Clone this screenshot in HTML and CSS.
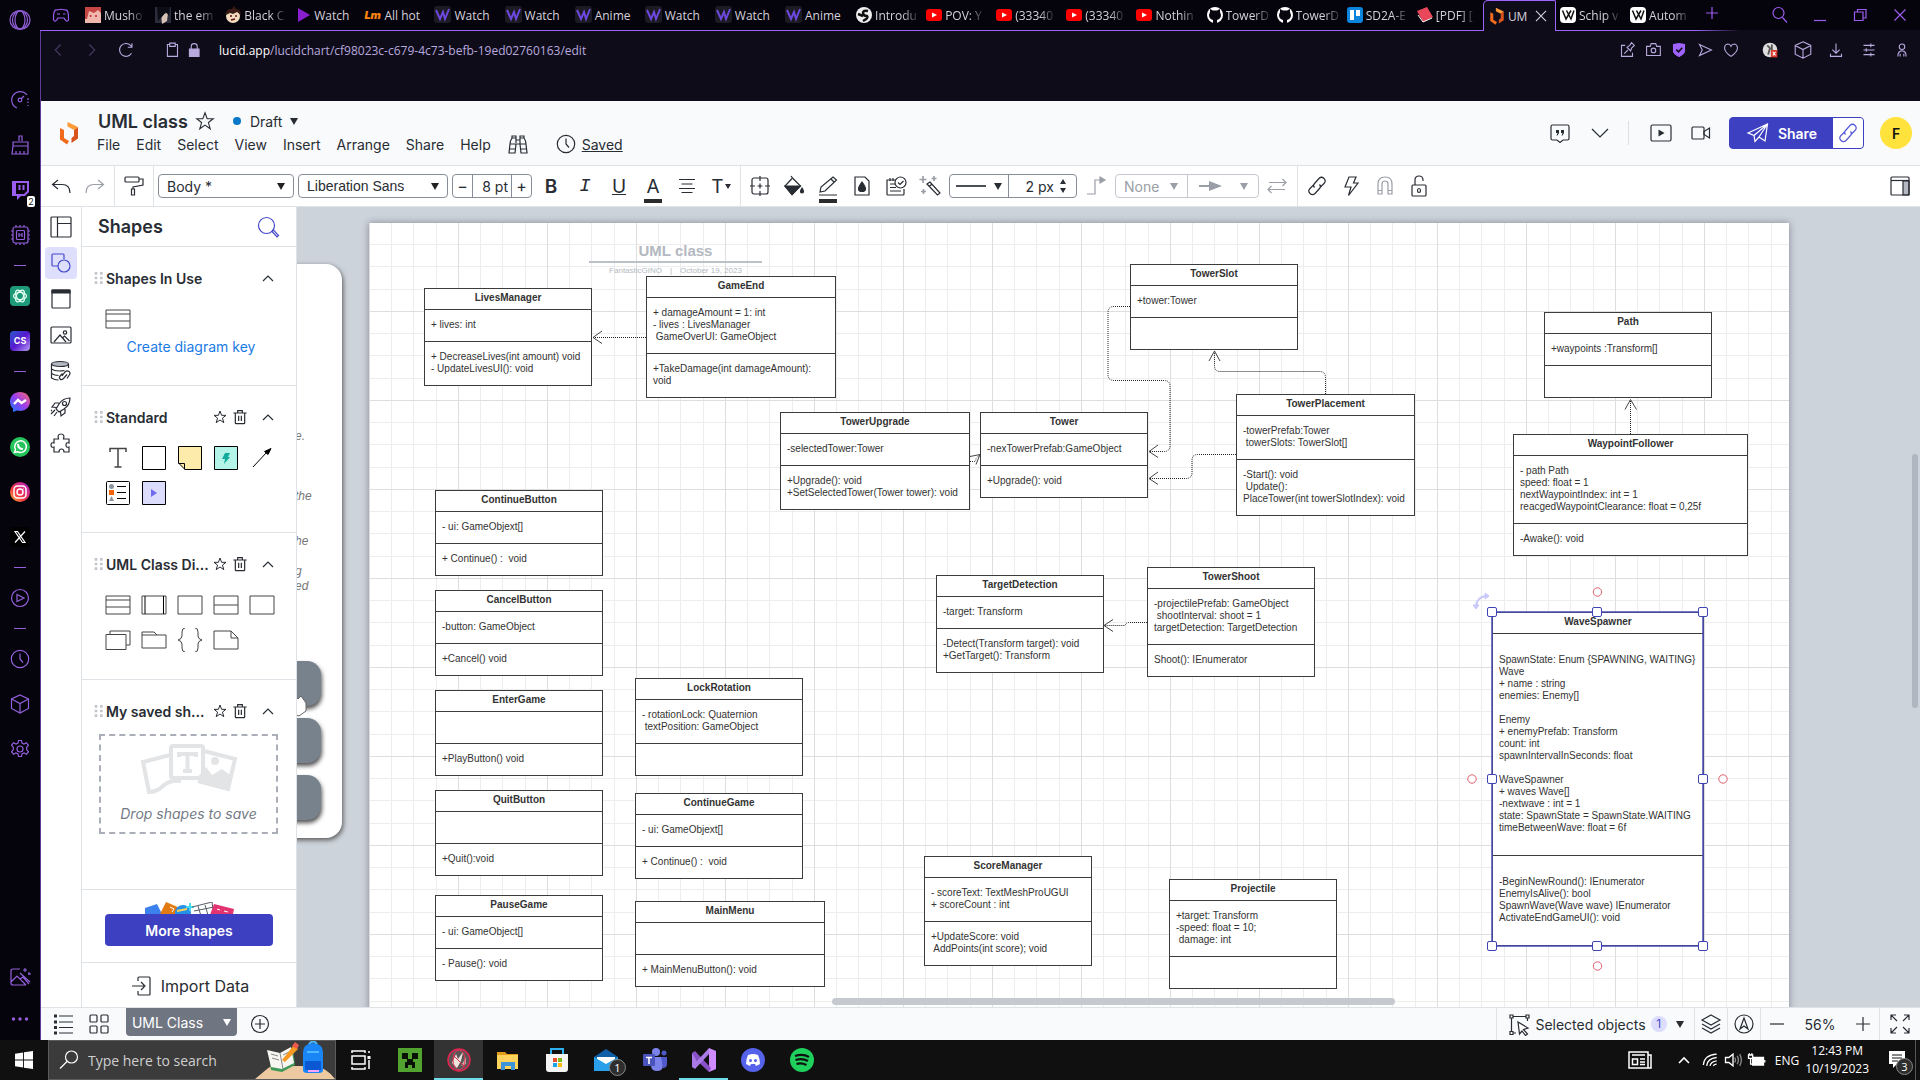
FILE: index.html
```html
<!DOCTYPE html>
<html lang="en">
<head>
<meta charset="utf-8">
<title>UML class: Lucidchart</title>
<link rel="stylesheet" href="styles.css">
</head>
<body>
<svg class="sprite" aria-hidden="true">
  <defs>
    <linearGradient id="g-ig" x1="0" y1="1" x2="1" y2="0"><stop offset="0" stop-color="#fdc33c"/><stop offset=".4" stop-color="#f4313f"/><stop offset="1" stop-color="#b021d8"/></linearGradient>
    <linearGradient id="g-ms" x1="0" y1="1" x2="1" y2="0"><stop offset="0" stop-color="#0a7cff"/><stop offset=".5" stop-color="#9a3df0"/><stop offset="1" stop-color="#ff6a66"/></linearGradient>
  </defs>
  <symbol id="opera" viewBox="0 0 24 24"><ellipse cx="12" cy="12" rx="10" ry="9.500"/><ellipse cx="12" cy="12" rx="5" ry="9"/><ellipse cx="12" cy="12" rx="7.500" ry="9"/></symbol>
  <symbol id="gauge" viewBox="0 0 24 24"><path d="M9 20A8.500 8.500 0 1 1 19 7"/><path d="M20 10v5M20 17v1" stroke-dasharray="2 1.500"/><circle cx="12" cy="12" r="1.800"/><path d="M13 11l3-3"/></symbol>
  <symbol id="broom" viewBox="0 0 24 24"><path d="M11 8V3h3v5M5 13v-4h15v4zM5 13l-1 8h16V13M8 21v-3M12 21v-3M16 21v-3"/></symbol>
  <symbol id="twitch" viewBox="0 0 24 24"><path d="M4 3h17v11l-4 4h-4l-4 4v-4H4z" fill="#9b5cf0" stroke="none"/><path d="M8 5h11v8l-3 3H8z" fill="#08050f" stroke="none"/><path d="M11.500 7v5M15.500 7v5" stroke="#9b5cf0" stroke-width="2"/></symbol>
  <symbol id="chip" viewBox="0 0 24 24"><rect x="5" y="4" width="15" height="16" rx="2"/><rect x="8.500" y="7.500" width="8" height="9" rx="1"/><path d="M11 10v4M14 10v4M11 12h3M8 4V2M12 4V2M16 4V2M8 22v-2M12 22v-2M16 22v-2M3 8h2M3 12h2M3 16h2M20 8h2M20 12h2M20 16h2"/></symbol>
  <symbol id="dash" viewBox="0 0 24 16"><path d="M6 8.500h12"/></symbol>
  <symbol id="gpt" viewBox="0 0 24 24"><rect x="2" y="2" width="20" height="20" rx="4" fill="#1f9a78" stroke="none"/><g stroke="#e6fff5" stroke-width="1.200"><ellipse cx="12" cy="12" rx="6.500" ry="3.500"/><ellipse cx="12" cy="12" rx="6.500" ry="3.500" transform="rotate(60 12 12)"/><ellipse cx="12" cy="12" rx="6.500" ry="3.500" transform="rotate(120 12 12)"/></g></symbol>
  <symbol id="messenger" viewBox="0 0 24 24"><path d="M12 2c6 0 10 4.200 10 9.600S18 21 12 21l-3-.4L5 22v-3.300C3 17 2 14.500 2 11.600 2 6.200 6 2 12 2z" fill="url(#g-ms)" stroke="none"/><path d="M6 14l4-4 3.500 3L18 10" stroke="#fff" stroke-width="2.400"/></symbol>
  <symbol id="whatsapp" viewBox="0 0 24 24"><circle cx="12" cy="12" r="10" fill="#25c35b" stroke="none"/><path d="M6.500 17.500l1-3a5.800 5.800 0 1 1 2.200 2.200z" stroke="#fff" stroke-width="1.500"/><path d="M10 9c0 3 2 5 5 5" stroke="#fff" stroke-width="2"/></symbol>
  <symbol id="insta" viewBox="0 0 24 24"><circle cx="12" cy="12" r="10" fill="url(#g-ig)" stroke="none"/><g stroke="#fff" stroke-width="1.500"><rect x="6" y="6" width="12" height="12" rx="3.500"/><circle cx="12" cy="12" r="3"/><path d="M15.300 8.500h.5"/></g></symbol>
  <symbol id="ex" viewBox="0 0 24 24"><rect x="2" y="2" width="20" height="20" rx="4" fill="#000" stroke="none"/><path d="M7 6.500h2.500L17 17.500h-2.500zM17 6.500L7 17.500" stroke="#fff" stroke-width="1.200"/></symbol>
  <symbol id="playc" viewBox="0 0 24 24"><circle cx="12" cy="12" r="8.500"/><path d="M9 8.500l7 3.500-7 3.500z"/></symbol>
  <symbol id="clock" viewBox="0 0 24 24"><circle cx="12" cy="12" r="8.700"/><path d="M12 6.500V12l3 3.500"/></symbol>
  <symbol id="cube" viewBox="0 0 24 24"><path d="M12 3l8.500 4v9.500L12 21l-8.500-4.500V7zM3.500 7L12 11.500 20.500 7M12 11.500V21"/></symbol>
  <symbol id="gear" viewBox="0 0 24 24"><circle cx="12" cy="12" r="3"/><path d="M10.500 3.500h3l.5 2.500 2 1 2.400-1.300 2 2.600-1.700 2v2.400l1.800 2-2 2.600-2.500-1.300-2 1-.5 2.500h-3L10 17l-2-1-2.500 1.300-2-2.600 1.800-2v-2.400l-1.800-2 2-2.600L8 7l2-1z"/></symbol>
  <symbol id="magicpic" viewBox="0 0 24 24"><path d="M12 4H5q-2 0-2 2v12q0 2 2 2h13M3 17l6-6 9 9M12 14l3-2 6 7M12 8l10 9M17 3v4M15 5h4M21 7v3M20 9h3"/></symbol>
  <symbol id="dots" viewBox="0 0 24 24"><g fill="currentColor" stroke="none"><circle cx="5.500" cy="12" r="1.700"/><circle cx="12" cy="12" r="1.700"/><circle cx="18.500" cy="12" r="1.700"/></g></symbol>
  <symbol id="pad" viewBox="0 0 24 24"><path d="M8 7q4-1.500 8 0 4-1 3.500 10-2 3-4.500-2H9q-2.500 5-4.500 2Q4 6 8 7zM8 11h3M14 11h2.500"/></symbol>
  <symbol id="back" viewBox="0 0 24 24"><path d="M15 6l-6 6 6 6"/></symbol>
  <symbol id="fwd" viewBox="0 0 24 24"><path d="M9 6l6 6-6 6"/></symbol>
  <symbol id="reload" viewBox="0 0 24 24"><path d="M18 15.500A7 7 0 1 1 17 7l1.500 2M18.500 4.500V9H14"/></symbol>
  <symbol id="clip" viewBox="0 0 24 24"><path d="M9 6H7v13h11V6h-2M9.500 8V4.500h6V8z"/></symbol>
  <symbol id="lockf" viewBox="0 0 24 24"><path d="M7 11h10.500v8H7z" fill="currentColor"/><path d="M9 11V8q0-3 3.200-3T15.500 8v3"/></symbol>
  <symbol id="pinpage" viewBox="0 0 24 24"><path d="M10 7H6v12h12v-4M9 16l4-4M12 9l4 4 1-3 3-3-3-3-2 3z"/></symbol>
  <symbol id="camera" viewBox="0 0 24 24"><path d="M5 8h4l1-3h5l1 3h4v10H5z"/><circle cx="12.500" cy="12.500" r="2.500"/></symbol>
  <symbol id="shield" viewBox="0 0 24 24"><path d="M6 6l6-1 6 1v7q0 3-6 6-6-3-6-6z" fill="#9f63ff" stroke="#9f63ff"/><path d="M9 11.500l2.500 2.500 4-4.500" stroke="#120d1d" stroke-width="1.800"/></symbol>
  <symbol id="send" viewBox="0 0 24 24"><path d="M6 6l13 6-13 6 3-6z"/></symbol>
  <symbol id="heart" viewBox="0 0 24 24"><path d="M12 19q-7-5-7-9t3.500-4.500Q11 5.500 12 8q1-2.500 3.500-2.500Q19 6 19 10t-7 9z"/></symbol>
  <symbol id="down" viewBox="0 0 24 24"><path d="M12 5v10M8 11.500l4 4 4-4M6 16v3h12v-3"/></symbol>
  <symbol id="sliders" viewBox="0 0 24 24"><path d="M6 7h12M6 12h12M6 17h12M14 5v4M9 10v4M14 15v4"/></symbol>
  <symbol id="person" viewBox="0 0 24 24"><circle cx="12" cy="8.500" r="3"/><path d="M7.500 19q0-6 4.500-6t4.500 6M10 16v3M14 16v3"/></symbol>
  <symbol id="search" viewBox="0 0 24 24"><circle cx="10.500" cy="10" r="5.500"/><path d="M14.500 14.500L19 19.500"/></symbol>
  <symbol id="searchl" viewBox="0 0 24 24"><circle cx="10.500" cy="10.500" r="8"/><path d="M16 16.500l1.500-1.500 5 5.500-1.500 1.500z"/></symbol>
  <symbol id="min" viewBox="0 0 24 24"><path d="M6 17.500h12"/></symbol>
  <symbol id="restore" viewBox="0 0 24 24"><path d="M6.500 9h8.500v8.500H6.500zM9.500 9V6.500h8.500V15H15"/></symbol>
  <symbol id="x" viewBox="0 0 24 24"><path d="M6.500 6.500l11 11M17.500 6.500l-11 11"/></symbol>
  <symbol id="plus" viewBox="0 0 24 24"><path d="M12 6v12M6 12h12"/></symbol>
  <symbol id="lucid" viewBox="0 0 24 24"><path d="M3 7l4 2v8l5 3-2 3.500L3 18.500z" fill="#f26b1d" stroke="none"/><path d="M17 9l4-3v11.500L14.500 22v-5l2.500-2z" fill="#d9541a" stroke="none"/><path d="M10.500 1L21 6l-4 3-6.500-3.500z" fill="#ff9a3a" stroke="none"/></symbol>
  <symbol id="star" viewBox="0 0 24 24"><path d="M12 3l2.400 6.500H21l-5.300 4.200 2 6.800L12 16.500l-5.700 4 2-6.800L3 9.500h6.600z"/></symbol>
  <symbol id="binoc" viewBox="0 0 24 24"><path d="M6 6V4h4v7M14 11V4h4v2M6 6h4M14 6h4M6 6q-2 3-2 6h16q0-3-2-6M10 8h4v4M4 12l-1 9h6l1-9M14 12l1 9h6l-1-9M3.500 17h6M14.500 17h6"/></symbol>
  <symbol id="comment" viewBox="0 0 24 24"><path d="M4.500 4h15q1.500 0 1.500 1.500v12q0 1.500-1.500 1.500H15l-3 2.500L9 19H4.500Q3 19 3 17.500v-12Q3 4 4.500 4z"/><path d="M8 9h3v3l-1.500 2.500H8.500l1-2.500H8zM13 9h3v3l-1.500 2.500h-1l1-2.500H13z" fill="currentColor" stroke="none"/></symbol>
  <symbol id="chev" viewBox="0 0 24 24"><path d="M4 8l8 8 8-8"/></symbol>
  <symbol id="chevup" viewBox="0 0 24 24"><path d="M7 15l5-5 5 5"/></symbol>
  <symbol id="present" viewBox="0 0 24 24"><rect x="2" y="4" width="20" height="16" rx="1.500"/><path d="M9.500 8.500l6 3.500-6 3.500z" fill="currentColor" stroke="none"/></symbol>
  <symbol id="video" viewBox="0 0 24 24"><rect x="3" y="6" width="12" height="12" rx="1"/><path d="M15 10.500L20.500 7v10L15 13.500z"/></symbol>
  <symbol id="plane" viewBox="0 0 24 24"><path d="M2 12L21.500 3l-2.500 17-6-4-4 4.500-1-6zM8 14.500L21.500 3M13 16L21.500 3M2 12l6 2.500"/></symbol>
  <symbol id="link" viewBox="0 0 24 24"><path d="M9.500 13.500q-2-2 0-4l4.500-5q2.500-2.500 5 0t0 5l-4 4M14.500 10.500q2 2 0 4l-4.500 5q-2.500 2.500-5 0t0-5l4-4"/></symbol>
  <symbol id="undo" viewBox="0 0 24 24"><path d="M9 6L3.500 10.500 9 15M3.500 10.500H13q8 0 8 8.500"/></symbol>
  <symbol id="redo" viewBox="0 0 24 24"><path d="M15 6l5.500 4.500L15 15M20.500 10.500H11q-8 0-8 8.500"/></symbol>
  <symbol id="roller" viewBox="0 0 24 24"><rect x="3" y="3" width="14" height="5" rx="1"/><path d="M17 5h4v6l-10 2v2M9.500 15h3v6h-3z"/></symbol>
  <symbol id="align" viewBox="0 0 24 24"><path d="M4 5.500h16M6.500 10h11M4 14.500h16M6.500 18.500h11"/></symbol>
  <symbol id="target" viewBox="0 0 24 24"><rect x="4" y="4" width="16" height="16" rx="2"/><path d="M12 2v5M12 17v5M2 12h5M17 12h5M9.500 12h5M12 9.500v5"/></symbol>
  <symbol id="bucket" viewBox="0 0 24 24"><path d="M3 12h15l-8 8.500z" fill="currentColor"/><path d="M9 2l2 2.500 7.500 7.500-8.500 8.500L3 12l7-7.500"/><path d="M20 14q3 4.500 0 5-3-.5 0-5z" fill="currentColor"/></symbol>
  <symbol id="pencil" viewBox="0 0 24 24"><path d="M4 18l1-5L17 3l3.500 3L9 17l-5 1zM15 5l3.500 3.500M3 21h18"/></symbol>
  <symbol id="pagedrop" viewBox="0 0 24 24"><path d="M5 3h10l4 4v14H5z"/><path d="M12 8q7 9 0 9.500-7-.5 0-9.500z" fill="currentColor"/></symbol>
  <symbol id="todo" viewBox="0 0 24 24"><path d="M12 6H3v14q0 1 1 1h15q1 0 1-1v-5M6 10h5M6 13.500h6M6 17h11M6 4v3M9 4v3"/><circle cx="16.500" cy="8.500" r="5.500"/><path d="M14 8.500l2 2 3.500-3.500"/></symbol>
  <symbol id="wand" viewBox="0 0 24 24"><path d="M9 10l3-2 10 11-2.500 2zM11 12.500l2.500-2"/><path d="M5 2v7M1.500 5.500h7M16 2v5M13.500 4.500h5M5.500 15v5M3 17.500h5" stroke="#9a9ea6" stroke-width="1.700"/></symbol>
  <symbol id="jog" viewBox="0 0 24 24"><path d="M3 20h8V6h6"/><path d="M16 3l5 3-5 3z" fill="currentColor"/></symbol>
  <symbol id="arrow" viewBox="0 0 24 24"><path d="M1 12h12" stroke-width="2"/><path d="M11 7l13 5-13 5z" fill="currentColor" stroke="none"/></symbol>
  <symbol id="swap" viewBox="0 0 24 24"><path d="M4 8.500h17M17.500 5l3.500 3.500-3.500 3.500M20 15.500H3M6.500 12L3 15.500 6.500 19"/></symbol>
  <symbol id="bolt" viewBox="0 0 24 24"><path d="M10 3h7l-2.500 6H19L9.500 21.500 12 13H6z"/></symbol>
  <symbol id="magnet" viewBox="0 0 24 24"><path d="M5 20V10q0-7 7-7t7 7v10h-4V10q0-3-3-3t-3 3v10zM5 16.500h4M15 16.500h4"/></symbol>
  <symbol id="unlock" viewBox="0 0 24 24"><rect x="5" y="11" width="14" height="11" rx="1"/><path d="M8 11V6q0-4 4-4t4 4v1M12 14.500q1.500 0 1.500 2t-1.500 2-1.500-2 1.500-2z"/></symbol>
  <symbol id="rpanel" viewBox="0 0 24 24"><path d="M15 7h6v14h-6z" fill="#b4b9c1"/><rect x="3" y="3" width="18" height="18" rx="1"/><path d="M3 6.500h18"/></symbol>
  <symbol id="layout" viewBox="0 0 24 24"><rect x="2" y="2" width="20" height="20" rx="1"/><path d="M8.500 2v20M8.500 8.500H22"/></symbol>
  <symbol id="shapes" viewBox="0 0 24 24"><path d="M9 15H4q-1 0-1-1V4q0-1 1-1h10q1 0 1 1v4"/><circle cx="15" cy="15" r="6"/></symbol>
  <symbol id="container" viewBox="0 0 24 24"><rect x="3" y="3" width="18" height="18" rx="1"/><path d="M3 3h18v3H3z" fill="currentColor"/></symbol>
  <symbol id="image" viewBox="0 0 24 24"><rect x="2" y="4" width="20" height="16" rx="1"/><path d="M5 19l6-7 6 7M13.500 15l2-2 5 5"/><circle cx="16" cy="9.500" r="1.700"/></symbol>
  <symbol id="dblink" viewBox="0 0 24 24"><ellipse cx="11" cy="5" rx="8.500" ry="2.500" fill="#b4b9c1"/><path d="M2.500 5v14q3 2 7 2M2.500 10q4 3 13 1.500M19.500 5v4M2.500 14.500q3 2 7 2M13 17l3-4q2-2 4-.5t0 4l-2 3M18 15.500l-3.500 4q-2 2-3.500.5t.5-3.500l2-2"/></symbol>
  <symbol id="rocket" viewBox="0 0 24 24"><path d="M21 3q-7 0-11 6l-3 5 3 3 5-3q6-4 6-11zM10 8H6l-3 4 4.500.5M16 14v4l-4 3-.5-4.500M6 15l-4 4M8 17l-3 4M3 15l-1 1"/><circle cx="15.500" cy="8.500" r="2"/></symbol>
  <symbol id="puzzle" viewBox="0 0 24 24"><path d="M5 21v-5q-3 1-3-2t3-2V8h4.500q-1.500-5 2.500-5t2.500 5H20v4q-3-1-3 2t3 2v5h-5q0-3-2.500-3T10 21z"/></symbol>
  <symbol id="trash" viewBox="0 0 24 24"><path d="M2 6h20M8.500 6V2.500h7V6M5 6v15q0 1 1 1h12q1 0 1-1V6M10 10v8M14 10v8"/></symbol>
  <symbol id="grip" viewBox="0 0 24 24"><g fill="#c3c6cc" stroke="none"><path d="M7 3h4v4H7zM15 3h4v4h-4zM7 10h4v4H7zM15 10h4v4h-4zM7 17h4v4H7zM15 17h4v4h-4z"/></g></symbol>
  <symbol id="s-class" viewBox="0 0 28 24"><path d="M2 3h24v18H2zM2 7h24M2 14h24"/></symbol>
  <symbol id="s-comp" viewBox="0 0 28 24"><path d="M2 3h24v18H2z"/><path d="M5 3v18M23.500 3v18" stroke="#000"/></symbol>
  <symbol id="s-rect" viewBox="0 0 28 24"><path d="M2 3h24v18H2z"/></symbol>
  <symbol id="s-two" viewBox="0 0 28 24"><path d="M2 3h24v18H2zM2 12h24"/></symbol>
  <symbol id="s-multi" viewBox="0 0 28 24"><path d="M6 6V3h20v14h-4"/><path d="M2 6.500h20v15H2z"/></symbol>
  <symbol id="s-pkg" viewBox="0 0 28 24"><path d="M2 20V4h12l3 3h9v13zM2 7h15"/></symbol>
  <symbol id="s-brace" viewBox="0 0 28 24"><path d="M9 0Q6 0 6 4v4q0 3-4 4 4 1 4 4v4q0 4 3 4M19 0q3 0 3 4v4q0 3 4 4-4 1-4 4v4q0 4-3 4"/></symbol>
  <symbol id="s-note" viewBox="0 0 28 24"><path d="M2 3h17l7 7v11H2zM19 3v7h7"/></symbol>
  <symbol id="f-w" viewBox="0 0 18 18"><rect width="17" height="17" rx="3" fill="#1d1b22"/><path d="M2 4l4 9 3-7 2 7 4-10" stroke="#6c48e0" stroke-width="2"/></symbol>
  <symbol id="f-yt" viewBox="0 0 18 18"><rect x="1" y="3" width="16" height="12" rx="3" fill="#f00"/><path d="M7 6.500l5 2.500-5 2.500z" fill="#fff"/></symbol>
  <symbol id="f-gh" viewBox="0 0 18 18"><circle cx="9" cy="9" r="8" fill="#fff"/><path d="M7 17v-3q-4-1-4-5l1-3V3l3 1.500h4L14 3v3l1 3q0 4-4 5v3z" fill="#08050f"/></symbol>
  <symbol id="f-wiki" viewBox="0 0 18 18"><rect x="1" y="1" width="16" height="16" rx="4" fill="#fff"/><path d="M3.500 4.500L7 13l5-8.500M7.500 4.500L12 13l3-8.500" stroke="#111" stroke-width="1.500"/></symbol>
  <symbol id="f-a" viewBox="0 0 18 18"><rect x="1" y="1" width="16" height="16" fill="#f0b8ac"/><path d="M1 1h16v6l-3-3-4 3-5-2-2 8H1z" fill="#c64545"/><circle cx="6.500" cy="10" r="1" fill="#b23"/><circle cx="12" cy="10" r="1" fill="#b23"/></symbol>
  <symbol id="f-b" viewBox="0 0 18 18"><rect x="1" y="1" width="16" height="16" fill="#2b2c3c"/><path d="M7 8l7-1-1 8-5 3z" fill="#d9c2b6"/><path d="M3 1h13l-1 9-3-4-5 6-3 3z" fill="#0c0d14"/></symbol>
  <symbol id="f-c" viewBox="0 0 18 18"><circle cx="9" cy="10" r="7" fill="#f2dcc0"/><path d="M2 9Q2 2 8 3l2-3 2 3q5 0 5 6l-4-3-4 2-3-1z" fill="#3a1c14"/><path d="M6 10h2M11 10h2M7 14l4-1" stroke="#611" stroke-width="1.500"/></symbol>
</svg>

<div class="desktop">
  <div class="browser">
    <nav class="gx" aria-label="Browser sidebar">
      <button class="gx-logo" aria-label="Opera GX"><svg class="ic"><use href="#opera"/></svg></button>
      <div class="gx-list">
        <button aria-label="Speed"><svg class="ic"><use href="#gauge"/></svg></button>
        <button aria-label="Cleaner"><svg class="ic"><use href="#broom"/></svg></button>
        <button aria-label="Twitch"><svg class="ic"><use href="#twitch"/></svg><span class="gx-badge">2</span></button>
        <button aria-label="Mods"><svg class="ic"><use href="#chip"/></svg></button>
        <svg class="dash"><use href="#dash"/></svg>
        <button aria-label="ChatGPT"><svg class="ic"><use href="#gpt"/></svg></button>
        <button aria-label="ChatSonic"><span class="cs">CS</span></button>
        <svg class="dash"><use href="#dash"/></svg>
        <button aria-label="Messenger"><svg class="ic"><use href="#messenger"/></svg></button>
        <button aria-label="WhatsApp"><svg class="ic"><use href="#whatsapp"/></svg></button>
        <button aria-label="Instagram"><svg class="ic"><use href="#insta"/></svg></button>
        <button aria-label="X"><svg class="ic"><use href="#ex"/></svg></button>
        <svg class="dash"><use href="#dash"/></svg>
        <button aria-label="Player"><svg class="ic"><use href="#playc"/></svg></button>
        <svg class="dash"><use href="#dash"/></svg>
        <button aria-label="History"><svg class="ic"><use href="#clock"/></svg></button>
        <button aria-label="Extensions"><svg class="ic"><use href="#cube"/></svg></button>
        <button aria-label="Settings"><svg class="ic"><use href="#gear"/></svg></button>
      </div>
      <div class="gx-end">
        <button aria-label="Wallpaper"><svg class="ic"><use href="#magicpic"/></svg></button>
        <button aria-label="More"><svg class="ic"><use href="#dots"/></svg></button>
      </div>
    </nav>

    <div class="window">
      <div class="tabbar">
        <button class="tab-pad" aria-label="GX corner"><svg class="ic"><use href="#pad"/></svg></button>
        <div class="tabs">
          <a class="tab" href="#"><svg class="fav"><use href="#f-a"/></svg><span class="fade">Musho</span></a>
          <a class="tab" href="#"><svg class="fav"><use href="#f-b"/></svg><span class="fade">the em</span></a>
          <a class="tab" href="#"><svg class="fav"><use href="#f-c"/></svg><span class="fade">Black C</span></a>
          <a class="tab" href="#"><svg class="fav" viewBox="0 0 18 18"><path d="M4 2l12 7-12 7z" fill="#8a1fd0"/></svg><span>Watch</span></a>
          <a class="tab" href="#"><b class="fav lm">Lm</b><span>All hot</span></a>
          <a class="tab" href="#"><svg class="fav"><use href="#f-w"/></svg><span>Watch</span></a>
          <a class="tab" href="#"><svg class="fav"><use href="#f-w"/></svg><span>Watch</span></a>
          <a class="tab" href="#"><svg class="fav"><use href="#f-w"/></svg><span>Anime</span></a>
          <a class="tab" href="#"><svg class="fav"><use href="#f-w"/></svg><span>Watch</span></a>
          <a class="tab" href="#"><svg class="fav"><use href="#f-w"/></svg><span>Watch</span></a>
          <a class="tab" href="#"><svg class="fav"><use href="#f-w"/></svg><span>Anime</span></a>
          <a class="tab" href="#"><svg class="fav" viewBox="0 0 18 18"><circle cx="9" cy="9" r="8" fill="#eee"/><path d="M13 5q-5-1-5 2t4 3q2 2-4 5M3 8l5 2" stroke="#111" stroke-width="2.500"/></svg><span class="fade">Introdu</span></a>
          <a class="tab" href="#"><svg class="fav"><use href="#f-yt"/></svg><span class="fade">POV: Y</span></a>
          <a class="tab" href="#"><svg class="fav"><use href="#f-yt"/></svg><span class="fade">(33340</span></a>
          <a class="tab" href="#"><svg class="fav"><use href="#f-yt"/></svg><span class="fade">(33340</span></a>
          <a class="tab" href="#"><svg class="fav"><use href="#f-yt"/></svg><span class="fade">Nothin</span></a>
          <a class="tab" href="#"><svg class="fav"><use href="#f-gh"/></svg><span class="fade">TowerD</span></a>
          <a class="tab" href="#"><svg class="fav"><use href="#f-gh"/></svg><span class="fade">TowerD</span></a>
          <a class="tab" href="#"><svg class="fav" viewBox="0 0 18 18"><rect x="1" y="1" width="16" height="16" rx="3" fill="#0a84dc"/><path d="M4 4h4v10H4zM10 4h4v6h-4z" fill="#fff"/></svg><span class="fade">SD2A-E</span></a>
          <a class="tab" href="#"><svg class="fav" viewBox="0 0 18 18"><path d="M1 5l10-4 6 10-10 5z" fill="#e8485a"/><path d="M2 9l5 7 9-4" stroke="#fff" stroke-width="1"/></svg><span class="fade">[PDF] [</span></a>
          <a class="tab active" href="#"><svg class="fav" viewBox="0 0 24 24"><use href="#lucid"/></svg><span>UM</span><svg class="ic x"><use href="#x"/></svg></a>
          <a class="tab" href="#"><svg class="fav"><use href="#f-wiki"/></svg><span class="fade">Schip v</span></a>
          <a class="tab" href="#"><svg class="fav"><use href="#f-wiki"/></svg><span class="fade">Autom</span></a>
        </div>
        <button class="tab-new" aria-label="New tab"><svg class="ic"><use href="#plus"/></svg></button>
        <div class="win-ctl">
          <button aria-label="Search tabs"><svg class="ic"><use href="#search"/></svg></button>
          <button aria-label="Minimise"><svg class="ic"><use href="#min"/></svg></button>
          <button aria-label="Restore"><svg class="ic"><use href="#restore"/></svg></button>
          <button aria-label="Close"><svg class="ic"><use href="#x"/></svg></button>
        </div>
      </div>

      <div class="page">
        <div class="address">
          <div class="addr-nav">
            <button class="dim" aria-label="Back"><svg class="ic"><use href="#back"/></svg></button>
            <button class="dim" aria-label="Forward"><svg class="ic"><use href="#fwd"/></svg></button>
            <button aria-label="Reload"><svg class="ic"><use href="#reload"/></svg></button>
          </div>
          <div class="addr-url">
            <svg class="ic"><use href="#clip"/></svg><svg class="ic"><use href="#lockf"/></svg>
            <p><b>lucid.app</b>/lucidchart/cf98023c-c679-4c73-befb-19ed02760163/edit</p>
          </div>
          <div class="addr-tools">
            <button aria-label="Pin"><svg class="ic"><use href="#pinpage"/></svg></button>
            <button aria-label="Snapshot"><svg class="ic"><use href="#camera"/></svg></button>
            <button aria-label="Blocker"><svg class="ic"><use href="#shield"/></svg></button>
            <button aria-label="Flow"><svg class="ic"><use href="#send"/></svg></button>
            <button aria-label="Bookmark"><svg class="ic"><use href="#heart"/></svg></button>
          </div>
          <div class="addr-ext">
            <button aria-label="Extension"><svg class="ic" viewBox="0 0 24 24"><circle cx="12" cy="12" r="8" fill="#ddd" stroke="none"/><path d="M9 7l3 3-2 7M14 6v6" stroke="#555" stroke-width="2"/><path d="M13 12h7v8h-7z" fill="#d8392b" stroke="none"/><path d="M15 14l3 4M18 14l-3 4" stroke="#fff"/></svg></button>
            <button aria-label="Extensions"><svg class="ic"><use href="#cube"/></svg></button>
            <button aria-label="Downloads"><svg class="ic"><use href="#down"/></svg></button>
            <button aria-label="Easy setup"><svg class="ic"><use href="#sliders"/></svg></button>
            <button aria-label="Profile"><svg class="ic"><use href="#person"/></svg></button>
          </div>
        </div>

        <header class="doc-head">
          <svg class="logo"><use href="#lucid"/></svg>
          <div class="doc-info">
            <div class="doc-title">
              <h1>UML class</h1><svg class="ic"><use href="#star"/></svg>
              <span class="dot"></span><button class="draft">Draft<i class="caret"></i></button>
            </div>
            <div class="menus">
              <button>File</button><button>Edit</button><button>Select</button><button>View</button><button>Insert</button><button>Arrange</button><button>Share</button><button>Help</button>
              <svg class="ic binoc"><use href="#binoc"/></svg>
              <svg class="ic"><use href="#clock"/></svg><a class="saved" href="#">Saved</a>
            </div>
          </div>
          <div class="head-right">
            <button aria-label="Comments"><svg class="ic"><use href="#comment"/></svg></button>
            <button aria-label="More"><svg class="ic"><use href="#chev"/></svg></button>
            <i class="rule"></i>
            <button aria-label="Present"><svg class="ic"><use href="#present"/></svg></button>
            <button aria-label="Video"><svg class="ic"><use href="#video"/></svg></button>
            <div class="share"><button class="share-main"><svg class="ic"><use href="#plane"/></svg>Share</button><button class="share-link" aria-label="Copy link"><svg class="ic"><use href="#link"/></svg></button></div>
            <button class="avatar">F</button>
          </div>
        </header>

        <div class="toolbar">
          <div class="grp hist">
            <button class="tb" aria-label="Undo"><svg class="ic"><use href="#undo"/></svg></button>
            <button class="tb off" aria-label="Redo"><svg class="ic"><use href="#redo"/></svg></button>
          </div>
          <div class="grp paint"><button class="tb" aria-label="Format painter"><svg class="ic"><use href="#roller"/></svg></button></div>
          <div class="grp text">
            <label class="sel style"><select aria-label="Text style"><option>Body *</option></select></label>
            <label class="sel family"><select aria-label="Font"><option>Liberation Sans</option></select></label>
            <div class="step"><button>−</button><input aria-label="Font size" value="8 pt"><button>+</button></div>
            <div class="btns">
              <button class="tb"><b>B</b></button><button class="tb"><em>I</em></button><button class="tb"><u>U</u></button>
              <button class="tb bar">A</button>
              <button class="tb" aria-label="Align"><svg class="ic"><use href="#align"/></svg></button>
              <button class="tb">T<i class="caret small"></i></button>
            </div>
          </div>
          <div class="grp shape">
            <button class="tb" aria-label="Centre"><svg class="ic"><use href="#target"/></svg></button>
            <button class="tb" aria-label="Fill"><svg class="ic"><use href="#bucket"/></svg></button>
            <button class="tb bar" aria-label="Line colour"><svg class="ic"><use href="#pencil"/></svg></button>
            <button class="tb" aria-label="Page style"><svg class="ic"><use href="#pagedrop"/></svg></button>
            <button class="tb" aria-label="Tasks"><svg class="ic"><use href="#todo"/></svg></button>
            <button class="tb" aria-label="Magic"><svg class="ic"><use href="#wand"/></svg></button>
            <div class="line"><button class="line-style" aria-label="Line style"><i class="stroke"></i><i class="caret"></i></button><input aria-label="Line width" value="2 px"><span class="spin"><i class="caret up"></i><i class="caret"></i></span></div>
            <button class="tb off" aria-label="Line shape"><svg class="ic"><use href="#jog"/></svg></button>
            <div class="ends off"><button>None<i class="caret"></i></button><button aria-label="End arrow"><svg class="ic"><use href="#arrow"/></svg><i class="caret"></i></button></div>
            <button class="tb off" aria-label="Swap"><svg class="ic"><use href="#swap"/></svg></button>
          </div>
          <div class="grp more">
            <button class="tb" aria-label="Link"><svg class="ic"><use href="#link"/></svg></button>
            <button class="tb" aria-label="Action"><svg class="ic"><use href="#bolt"/></svg></button>
            <button class="tb off" aria-label="Magnet"><svg class="ic"><use href="#magnet"/></svg></button>
            <button class="tb" aria-label="Lock"><svg class="ic"><use href="#unlock"/></svg></button>
          </div>
          <button class="tb dock" aria-label="Right panel"><svg class="ic"><use href="#rpanel"/></svg></button>
        </div>

        <div class="work">
          <nav class="rail" aria-label="Panels">
            <button aria-label="Templates"><svg class="ic"><use href="#layout"/></svg></button>
            <button class="on" aria-label="Shapes"><svg class="ic"><use href="#shapes"/></svg></button>
            <button aria-label="Containers"><svg class="ic"><use href="#container"/></svg></button>
            <button aria-label="Images"><svg class="ic"><use href="#image"/></svg></button>
            <button aria-label="Data"><svg class="ic"><use href="#dblink"/></svg></button>
            <button aria-label="Launch"><svg class="ic"><use href="#rocket"/></svg></button>
            <button aria-label="Plugins"><svg class="ic"><use href="#puzzle"/></svg></button>
          </nav>

          <aside class="panel">
            <div class="panel-head"><h2>Shapes</h2><button aria-label="Search shapes"><svg class="ic"><use href="#searchl"/></svg></button></div>
            <section class="box use">
              <div class="box-head"><svg class="ic grip"><use href="#grip"/></svg><h3>Shapes In Use</h3><svg class="ic"><use href="#chevup"/></svg></div>
              <div class="cells uml"><svg><use href="#s-class"/></svg></div>
              <a class="key" href="#">Create diagram key</a>
            </section>
            <section class="box std">
              <div class="box-head"><svg class="ic grip"><use href="#grip"/></svg><h3>Standard</h3><svg class="ic s"><use href="#star"/></svg><svg class="ic t"><use href="#trash"/></svg><svg class="ic"><use href="#chevup"/></svg></div>
              <div class="cells">
                <svg viewBox="0 0 24 24"><path d="M4 6V2.500h16V6M12 2.500v18M8.500 21h7" stroke="#444" stroke-width="1.500"/></svg>
                <svg viewBox="0 0 24 24"><path d="M.5.500h23v23H.5z" fill="#fff"/></svg>
                <svg viewBox="0 0 24 24"><path d="M.5.500h23v23H7L.5 17z" fill="#fdebab"/><path d="M.5 17.500h6v6"/></svg>
                <svg viewBox="0 0 24 24"><path d="M.5.500h23v23H.5z" fill="#b4f4e8"/><path d="M11 7h5l-2 4h2l-6 7 1-5H8z" fill="#12ab9c" stroke="none"/></svg>
                <svg viewBox="0 0 24 24"><path d="M3 21L17 6"/><path d="M21 2.500l-3 6-3.500-3z" fill="#000"/></svg>
                <svg viewBox="0 0 24 24"><rect x=".5" y=".5" width="23" height="23" rx="1" fill="#fff"/><path d="M11 5.500h9M11 11.500h9M11 17.500h9"/><circle cx="5.500" cy="5.500" r="2.500" fill="#8d949e" stroke="none"/><path d="M3 9h5v5H3z" fill="#f5640a" stroke="none"/><path d="M3 20l2.500-5L8 20z" fill="#8d949e" stroke="none"/></svg>
                <svg viewBox="0 0 24 24"><path d="M.5.500h23v23H.5z" fill="#dcdcfd"/><path d="M9 8l6 4-6 4z" fill="#6f6af0" stroke="none"/></svg>
              </div>
            </section>
            <section class="box cls">
              <div class="box-head"><svg class="ic grip"><use href="#grip"/></svg><h3>UML Class Di...</h3><svg class="ic s"><use href="#star"/></svg><svg class="ic t"><use href="#trash"/></svg><svg class="ic"><use href="#chevup"/></svg></div>
              <div class="cells uml">
                <svg><use href="#s-class"/></svg><svg><use href="#s-comp"/></svg><svg><use href="#s-rect"/></svg><svg><use href="#s-two"/></svg><svg><use href="#s-rect"/></svg>
                <svg><use href="#s-multi"/></svg><svg><use href="#s-pkg"/></svg><svg><use href="#s-brace"/></svg><svg><use href="#s-note"/></svg>
              </div>
            </section>
            <section class="box saved-box">
              <div class="box-head"><svg class="ic grip"><use href="#grip"/></svg><h3>My saved sh...</h3><svg class="ic s"><use href="#star"/></svg><svg class="ic t"><use href="#trash"/></svg><svg class="ic"><use href="#chevup"/></svg></div>
              <div class="drop">
                <svg viewBox="0 0 98 52" fill="none" stroke="#e2e4e6" stroke-width="4"><path d="M30 12L3 19l6 30q8 0 14-6t18-5M64 8l31 8-7 30-30-8"/><rect x="31" y="3" width="32" height="32" rx="2" fill="#fff"/><path d="M56 36l10-12 6 8 10-6 8 6-3 15z" fill="#e2e4e6" stroke="none"/><circle cx="75" cy="18" r="4" fill="#e2e4e6" stroke="none"/><path d="M39 14V11h17v3M47.500 11v17M43 28h9"/></svg>
                <p>Drop shapes to save</p>
              </div>
            </section>
            <div class="more-shapes">
              <svg viewBox="0 0 90 24"><path d="M1 6l12-4 5 10H1z" fill="#3b82ee"/><path d="M22 0l14 6-6 10-14-4z" fill="#e27b12"/><path d="M26 5l4 2-2 3" stroke="#fff" fill="none"/><circle cx="39" cy="11" r="8" fill="#2490e8"/><path d="M33 9l10-2" stroke="#ffd257" stroke-width="2"/><path d="M46 1v8M42 5h8" stroke="#44dcf4" stroke-width="2"/><path d="M48 5l20-5 2 14M50 9l20-4M54 4l3 10M61 3l3 10" fill="none" stroke="#555c68"/><path d="M70 2l20 5-2 10-22-4z" fill="#e33370"/><path d="M73 7l3 1M80 9l4 1" stroke="#fff"/></svg>
              <button>More shapes</button>
            </div>
            <button class="import"><svg class="ic" viewBox="0 0 24 24"><path d="M9 7V4q0-1 1-1h10q1 0 1 1v16q0 1-1 1H10q-1 0-1-1v-3M3 12h12M12 8l4 4-4 4"/></svg>Import Data</button>
          </aside>

          <main class="canvas">
            <div class="card">
              <p>e.



the


he

g
ed</p>
              <i class="pill"></i><i class="pill"></i><i class="pill"></i>
              <svg class="hand" viewBox="0 0 16 24"><path d="M-4 6q0-5 4-4l3 3 3-3 5 7v8l-7 5-8-3z" fill="#fff" stroke="#666"/></svg>
            </div>
            <div class="sheet">
              <svg class="wires" viewBox="369 223 1420 784" aria-hidden="true">
                <g class="dots">
                  <path d="M646 337.500H593"/>
                  <path d="M1130 306.500H1114q-6 0-6 6V374.500q0 6 6 6H1164q6 0 6 6V445.500q0 6-6 6H1149"/>
                  <path d="M1236 454.500H1198q-6 0-6 6V472.500q0 6-6 6H1149"/>
                  <path d="M1325.500 394V377.500q0-6-6-6H1220q-5.500 0-5.500-6V351"/>
                  <path d="M1147 622.500H1129q-3 0-4 3H1104"/>
                  <path d="M970 461.500h4q2 0 2-3l4-4"/>
                  <path d="M1630.500 434V400"/>
                </g>
                <path d="M602 331l-9 6.500 9 6M1158 445l-9 6.500 9 6M1158 472l-9 6.500 9 6M1209 361l5.500-10 5.500 10M1113 619.500l-9 6 9 6M970 456.500l10-2-4 10M1625 409.500l5.500-10 6 10"/>
              </svg>
              <div class="caption"><h2>UML class</h2><p>FantasticGINO<span>|</span>October 19, 2023</p></div>

              <article class="node n-lives"><h3>LivesManager</h3><p>+ lives: int</p><p>+ DecreaseLives(int amount) void
- UpdateLivesUI(): void</p></article>
              <article class="node n-end"><h3>GameEnd</h3><p>+ damageAmount = 1: int
- lives : LivesManager
 GameOverUI: GameObject</p><p>+TakeDamage(int damageAmount):
void</p></article>
              <article class="node n-upgrade"><h3>TowerUpgrade</h3><p>-selectedTower:Tower</p><p>+Upgrade(): void
+SetSelectedTower(Tower tower): void</p></article>
              <article class="node n-tower"><h3>Tower</h3><p>-nexTowerPrefab:GameObject</p><p>+Upgrade(): void</p></article>
              <article class="node n-slot"><h3>TowerSlot</h3><p>+tower:Tower</p><p></p></article>
              <article class="node n-place"><h3>TowerPlacement</h3><p>-towerPrefab:Tower
 towerSlots: TowerSlot[]</p><p>-Start(): void
 Update():
PlaceTower(int towerSlotIndex): void</p></article>
              <article class="node n-path"><h3>Path</h3><p>+waypoints :Transform[]</p><p></p></article>
              <article class="node n-follow"><h3>WaypointFollower</h3><p>- path Path
speed: float = 1
nextWaypointIndex: int = 1
reacgedWaypointClearance: float = 0,25f</p><p>-Awake(): void</p></article>
              <article class="node n-continue"><h3>ContinueButton</h3><p>- ui: GameObjext[]</p><p>+ Continue() :  void</p></article>
              <article class="node n-cancel"><h3>CancelButton</h3><p>-button: GameObject</p><p>+Cancel() void</p></article>
              <article class="node n-enter"><h3>EnterGame</h3><p></p><p>+PlayButton() void</p></article>
              <article class="node n-quit"><h3>QuitButton</h3><p></p><p>+Quit():void</p></article>
              <article class="node n-pause"><h3>PauseGame</h3><p>- ui: GameObject[]</p><p>- Pause(): void</p></article>
              <article class="node n-lock"><h3>LockRotation</h3><p>- rotationLock: Quaternion
 textPosition: GameObject</p><p></p></article>
              <article class="node n-cgame"><h3>ContinueGame</h3><p>- ui: GameObjext[]</p><p>+ Continue() :  void</p></article>
              <article class="node n-menu"><h3>MainMenu</h3><p></p><p>+ MainMenuButton(): void</p></article>
              <article class="node n-detect"><h3>TargetDetection</h3><p>-target: Transform</p><p>-Detect(Transform target): void
+GetTarget(): Transform</p></article>
              <article class="node n-shoot"><h3>TowerShoot</h3><p>-projectilePrefab: GameObject
 shootInterval: shoot = 1
targetDetection: TargetDetection</p><p>Shoot(): IEnumerator</p></article>
              <article class="node n-score"><h3>ScoreManager</h3><p>- scoreText: TextMeshProUGUI
+ scoreCount : int</p><p>+UpdateScore: void
 AddPoints(int score); void</p></article>
              <article class="node n-proj"><h3>Projectile</h3><p>+target: Transform
-speed: float = 10;
 damage: int</p><p></p></article>
              <article class="node n-wave"><h3>WaveSpawner</h3><p>SpawnState: Enum {SPAWNING, WAITING}
Wave
+ name : string
enemies: Enemy[]

Enemy
+ enemyPrefab: Transform
count: int
spawnIntervalInSeconds: float

WaveSpawner
+ waves Wave[]
-nextwave : int = 1
state: SpawnState = SpawnState.WAITING
timeBetweenWave: float = 6f</p><p>-BeginNewRound(): IEnumerator
EnemyIsAlive(): bool
SpawnWave(Wave wave) IEnumerator
ActivateEndGameUI(): void</p></article>
              <svg class="handles" viewBox="1462 582 272 394" aria-hidden="true">
                <rect x="1492" y="612" width="211" height="334" stroke="#4a4db4" stroke-width="1.500"/>
                <g stroke="#3f43b4" fill="#fff"><rect x="1487.500" y="607.500" width="9" height="9" rx="1.500"/><rect x="1592.500" y="607.500" width="9" height="9" rx="1.500"/><rect x="1698.500" y="607.500" width="9" height="9" rx="1.500"/><rect x="1487.500" y="774.500" width="9" height="9" rx="1.500"/><rect x="1698.500" y="774.500" width="9" height="9" rx="1.500"/><rect x="1487.500" y="941.500" width="9" height="9" rx="1.500"/><rect x="1592.500" y="941.500" width="9" height="9" rx="1.500"/><rect x="1698.500" y="941.500" width="9" height="9" rx="1.500"/></g>
                <g stroke="#e0606e" fill="#fff"><circle cx="1597.500" cy="592" r="4.200"/><circle cx="1472" cy="779" r="4.200"/><circle cx="1723" cy="779" r="4.200"/><circle cx="1597.500" cy="966" r="4.200"/></g>
                <g stroke="#c9c8fb" stroke-width="2"><path d="M1476 606q1-9 10-10"/><path d="M1485 593l4 3-4 3zM1473 605h6l-3 4z" fill="#c9c8fb" stroke-width="1"/></g>
              </svg>
            </div>
            <i class="sb-h"></i><i class="sb-v"></i>
          </main>
        </div>

        <footer class="status">
          <button aria-label="Page list"><svg class="ic" viewBox="0 0 24 24"><path d="M8 4h14M8 10h14M8 15.500h14M8 21h14"/><path d="M3 4h3M3 10h3M3 15.500h3M3 21h3" stroke-width="3"/></svg></button>
          <button aria-label="Page grid"><svg class="ic" viewBox="0 0 24 24"><rect x="3" y="3" width="7" height="7" rx="1"/><rect x="14" y="3" width="7" height="7" rx="1"/><rect x="3" y="14" width="7" height="7" rx="1"/><rect x="14" y="14" width="7" height="7" rx="1"/></svg></button>
          <button class="sheet-tab">UML Class<i class="caret"></i></button>
          <button aria-label="Add page"><svg class="ic" viewBox="0 0 24 24"><circle cx="12" cy="12" r="8.500"/><path d="M12 7v10M7 12h10"/></svg></button>
          <div class="status-right">
            <button class="selobj"><svg class="ic" viewBox="0 0 24 24"><path d="M4.500 6v14M6 4.500h13M20.500 6v3M6 21h3M3 3h3v3H3zM19 3h3v3h-3zM3 19.500h3v3H3z"/><path d="M11 10l10 6-4.500 1.500 4 4.500-2 1.500-3.500-4.500-2.500 3z" fill="#fff"/></svg>Selected objects<span class="count">1</span><i class="caret"></i></button>
            <button class="cell" aria-label="Layers"><svg class="ic" viewBox="0 0 24 24"><path d="M12 3l9 5-9 5-9-5zM3 12l9 5 9-5M3 16l9 5 9-5"/></svg></button>
            <button class="cell" aria-label="Accessibility"><svg class="ic" viewBox="0 0 24 24"><circle cx="12" cy="12" r="9"/><path d="M8 17l4-11 4 11-4-3z"/></svg></button>
            <div class="zoom"><button aria-label="Zoom out"><svg class="ic" viewBox="0 0 24 24"><path d="M5 12h14"/></svg></button><span>56%</span><button aria-label="Zoom in"><svg class="ic" viewBox="0 0 24 24"><path d="M5 12h14M12 5v14"/></svg></button></div>
            <button class="full" aria-label="Full screen"><svg class="ic" viewBox="0 0 24 24"><path d="M3 8V3h5M3 3l6 6M16 3h5v5M21 3l-6 6M3 16v5h5M3 21l6-6M21 16v5h-5M21 21l-6-6"/></svg></button>
          </div>
        </footer>
      </div>
    </div>
  </div>

  <div class="taskbar">
    <button class="start" aria-label="Start"><svg viewBox="0 0 20 20"><path d="M0 3l9-1.300V9.500H0zM10 1.500L20 0v9.500H10zM0 10.500h9v7.800L0 17zM10 10.500h10V20l-10-1.500z" fill="#fff"/></svg></button>
    <label class="find"><svg class="ic" viewBox="0 0 24 24"><circle cx="14.500" cy="9" r="6"/><path d="M10 13.500L3 20.500"/></svg><input placeholder="Type here to search">
      <svg class="art" viewBox="0 0 80 38"><path d="M0 38l12-10q3-3 8-3h40q12 2 20 13z" fill="#ecc9a0"/><path d="M14 12l12 3 12-6 2 15-13 7-11-2z" fill="#3f9a58"/><path d="M12 9l13 3 11-6 3 16-12 6-11-2z" fill="#f7f6f2"/><path d="M25 12l3 16M16 13l7 2M17 17l7 2M28 14l6-3" stroke="#888"/><path d="M27 19l12-15 4 4-13 13z" fill="#f79a22"/><path d="M37 5l3-4 4 3-2 4z" fill="#ee5a4c"/><path d="M48 11q0-8 10-9 10 1 10 9v18q0 3-4 3H52q-4 0-4-3z" fill="#1a86f5"/><path d="M50 20h16v9H50z" fill="#0a58d4"/><path d="M53 30h11" stroke="#f6a6ff" stroke-width="2"/><path d="M54 3q4-5 8 0M52 11h12" stroke="#4bb8ff" stroke-width="2"/></svg></label>
    <div class="apps">
      <button aria-label="Task view"><svg class="app" viewBox="0 0 24 24"><path d="M3 5V3h13v2M3 19v2h13v-2M3 8h13v8H3zM20 3v2M20 12v9" fill="none" stroke="#fff" stroke-width="1.500"/><path d="M18.500 8h3v3h-3z" fill="#fff"/></svg></button>
      <button aria-label="Minecraft"><svg class="app" viewBox="0 0 24 24"><path d="M0 0h24v24H0z" fill="#52a32f"/><path d="M4 5h6v6H4zM14 5h6v6h-6zM9 11h6v3h2v6h-3v-3h-4v3H7v-6h2z" fill="#071204"/></svg></button>
      <button class="open now" aria-label="Opera GX"><svg class="app" viewBox="0 0 24 24"><circle cx="12" cy="12" r="11" fill="#5c5656" stroke="#e0244f" stroke-width="1.500"/><path d="M5 15l4-9 2 5 5-7-2 9-4 7z" fill="#eee6dc"/><path d="M14 18l5-9v7z" fill="#c9bdb0"/><ellipse cx="12" cy="12" rx="6" ry="10" fill="none" stroke="#f0315a"/><path d="M6 7l12 12" stroke="#e0244f"/></svg></button>
      <button aria-label="Explorer"><svg class="app" viewBox="0 0 24 24"><path d="M1 4h8l2 2h11v3H1z" fill="#e09e1b"/><path d="M1 7h21v14H1z" fill="#ffd35c"/><path d="M5 22v-8h14v8h-4v-4H9v4z" fill="#3d94d8"/></svg></button>
      <button aria-label="Store"><svg class="app" viewBox="0 0 24 24"><path d="M6 6V1h12v5" fill="none" stroke="#2cb1ee" stroke-width="2"/><path d="M1 6h22v15q0 3-3 3H4q-3 0-3-3z" fill="#f4f4f4"/><path d="M8 10h4v4H8z" fill="#e74f2b"/><path d="M13 10h4v4h-4z" fill="#7db817"/><path d="M8 15h4v4H8z" fill="#18a3e8"/><path d="M13 15h4v4h-4z" fill="#fbb810"/></svg></button>
      <button aria-label="Mail"><svg class="app" viewBox="0 0 24 24"><path d="M0 9l12-8 12 8v14H0z" fill="#0f5fa8"/><path d="M3 9h18v8H3z" fill="#fff"/><path d="M0 9l12 7 12-7v14H0z" fill="#2aa0ea"/></svg><span class="note">1</span></button>
      <button aria-label="Teams"><svg class="app" viewBox="0 0 24 24"><circle cx="13" cy="4" r="4" fill="#7b83eb"/><circle cx="21" cy="5" r="2.500" fill="#5059c9"/><path d="M8 9h12v8q0 6-6 6t-6-6z" fill="#7b83eb"/><path d="M18 9h6v7q0 4-4 4z" fill="#5059c9"/><rect y="6" width="12" height="12" rx="1" fill="#4b53bc"/><path d="M3 9.500h6M6 9.500V16" stroke="#fff" stroke-width="1.600"/></svg></button>
      <button class="open" aria-label="Visual Studio"><svg class="app" viewBox="0 0 24 24"><path d="M17 0l7 3v18l-7 3z" fill="#d08bff"/><path d="M0 5l3-2 16 17-2 4L0 8z" fill="#8a50c7"/><path d="M0 5v14l3 2L17 6V0L5 13z" fill="#a979e6"/></svg></button>
      <button aria-label="Discord"><svg class="app" viewBox="0 0 24 24"><circle cx="12" cy="12" r="12" fill="#5562ea"/><path d="M7 7q5-2 10 0 2 4 2 9l-4 2-1-2h-4l-1 2-4-2q0-5 2-9z" fill="#fff"/><circle cx="9.500" cy="12.500" r="1.500" fill="#5562ea"/><circle cx="14.500" cy="12.500" r="1.500" fill="#5562ea"/></svg></button>
      <button aria-label="Spotify"><svg class="app" viewBox="0 0 24 24"><circle cx="12" cy="12" r="12" fill="#1fd05d"/><path d="M5 8q8-2.500 14 1M5.500 12q7-2 12.500 1M6.500 16q5-1.500 10 1" fill="none" stroke="#101010" stroke-width="2.200"/></svg></button>
    </div>
    <div class="tray">
      <svg class="news" viewBox="0 0 24 20"><path d="M1 2h19v16H1zM20 5h3v13h-4M4 5h13" fill="none" stroke="#fff" stroke-width="1.500"/><path d="M4.500 9h5v5.500h-5zM12 9h5M12 12h5M12 14.500h5" fill="none" stroke="#fff" stroke-width="1.500"/></svg>
      <svg class="ic up"><use href="#chevup"/></svg>
      <svg class="ic" viewBox="0 0 24 24"><path d="M4 18Q5 6 20 5M8 19q1-9 12-10M12 19q1-5 8-6M16 19q1-2 4-2"/></svg>
      <svg class="ic" viewBox="0 0 24 24"><path d="M3 9h4l5-4v14l-5-4H3z"/><path d="M14 9q2 3 0 6M17 7q3 5 0 10M20 5q4 7 0 14" stroke="#8a8a8a"/></svg>
      <svg class="ic" viewBox="0 0 24 24"><path d="M8 9h13v9H8z" fill="#fff"/><path d="M3 6h5v4H3zM4 4v2M7 4v2M5.500 10v7H8M22.500 12v3"/></svg>
      <span class="lang">ENG</span>
      <time>12:43 PM<br>10/19/2023</time>
      <button class="alerts" aria-label="Notifications"><svg viewBox="0 0 16 18"><path d="M0 0h16v13H8l-4 4v-4H0z" fill="#fff"/><path d="M3 4h10M3 7h10M3 10h6" stroke="#111"/></svg><span class="note">3</span></button>
    </div>
  </div>
</div>
</body>
</html>
```

FILE: styles.css
```css
* { box-sizing: border-box; }
body { margin: 0; font-family: "Inter", "Liberation Sans", sans-serif; font-size: 14px; color: #282c33; }
h1, h2, h3, p { margin: 0; }
button, input, select { font: inherit; color: inherit; background: none; border: 0; padding: 0; margin: 0; min-width: 0; }
button { display: flex; align-items: center; justify-content: center; flex: none; }
a { color: inherit; text-decoration: none; }
svg { display: block; flex: none; fill: none; }
.sprite { position: absolute; width: 0; height: 0; }
.ic { width: 24px; height: 24px; stroke: currentColor; stroke-width: 1.2; }
.caret { flex: none; width: 0; height: 0; border: 4px solid transparent; border-top: 7px solid currentColor; border-bottom: 0; }
.caret.up { border-top: 0; border-bottom: 7px solid currentColor; }

.desktop { display: flex; flex-direction: column; height: 100vh; overflow: hidden; }
.browser { flex: 1; display: flex; min-height: 0; background: #05030b; }

/* browser sidebar */
.gx { width: 40px; flex: none; display: flex; flex-direction: column; color: #9460dc; background: #05030b; }
.gx button { width: 40px; height: 45px; position: relative; }
.gx .gx-logo { height: 40px; }
.gx-list { margin-top: 37px; display: flex; flex-direction: column; align-items: center; }
.dash { width: 24px; height: 16px; stroke: currentColor; }
.gx-badge { position: absolute; right: 5px; bottom: 5px; width: 8px; height: 11px; background: #fff; color: #111; font-size: 9px; line-height: 11px; border-radius: 2px; text-align: center; }
.cs { width: 20px; height: 20px; border-radius: 4px; background: linear-gradient(135deg, #2a5ad0, #5717cf 50%, #b79cf5); color: #fff; font-size: 9px; font-weight: 700; line-height: 20px; }
.gx-end { margin-top: auto; }
.gx-end button { height: 42px; }

.window { flex: 1; min-width: 0; display: flex; flex-direction: column; }
.tabbar { height: 31px; flex: none; display: flex; color: #9b5cf0; background: linear-gradient(90deg, #9f63ff 1656px, #0f0c1a 1700px) bottom / 100% 1px no-repeat #05030b; font-family: "Open Sans", sans-serif; font-size: 12px; }
.tab-pad { width: 41px; height: 30px; }
.tabs { flex: 1; display: flex; min-width: 0; }
.tab { flex: 1 1 0; min-width: 0; display: flex; align-items: center; gap: 2px; height: 30px; padding-left: 3px; color: #d4d1dc; }
.tab span { white-space: nowrap; }
.fade { mask-image: linear-gradient(90deg, #000 65%, rgba(0, 0, 0, .2)); }
.fav { width: 18px; height: 18px; flex: none; }
.lm { color: #ff8412; font: italic 900 11px/18px "Inter", sans-serif; }
.tab.active { height: 31px; padding-left: 4px; background: #0f0c1a; border: 1px solid #9f63ff; border-bottom: 0; border-radius: 5px 2px 0 0; }
.tab .x { width: 22px; height: 22px; margin-left: auto; margin-right: 3px; }
.tab-new { width: 32px; height: 26px; }
.win-ctl { width: 192px; padding-left: 32px; display: flex; }
.win-ctl button { width: 40px; height: 30px; }

.page { flex: 1; min-height: 0; display: flex; flex-direction: column; border-left: 1px solid #5d3b98; background: #fff; }
.address { height: 70px; flex: none; display: flex; align-items: flex-start; padding-top: 7px; background: #0f0c1a; color: #b8a9de; font-family: "Open Sans", sans-serif; font-size: 12px; }
.address .ic { width: 22px; height: 22px; }
.addr-nav { display: flex; }
.addr-nav button { width: 34px; height: 24px; }
.addr-nav .dim { color: #453a60; }
.addr-url { flex: 1; display: flex; align-items: center; height: 24px; margin-left: 18px; }
.addr-url p { margin-left: 14px; }
.addr-url b { color: #fff; font-weight: 400; }
.addr-tools { display: flex; margin-right: 9px; }
.addr-tools button { width: 26px; height: 24px; }
.addr-ext { display: flex; padding-right: 2px; }
.addr-ext button { width: 33px; height: 24px; }

/* document header */
.doc-head { height: 65px; flex: none; display: flex; background: #f9fafc; border-bottom: 1px solid #dfe2e7; }
.logo { width: 24px; height: 24px; margin: 20px 17px 0 16px; }
.doc-title { display: flex; align-items: center; height: 24px; margin-top: 8px; }
.doc-title h1 { font-size: 18px; font-weight: 600; margin-right: 6px; }
.doc-title .ic { width: 22px; height: 22px; }
.dot { width: 8px; height: 8px; border-radius: 50%; background: #0a78c8; margin: 0 9px 0 17px; }
.draft { gap: 8px; }
.menus { display: flex; align-items: center; gap: 16px; height: 24px; margin: -1px 0 0 -1px; }
.menus .binoc { margin: 0 8px 0 -1px; }
.saved { margin-left: -12px; text-decoration: underline; }
.head-right { margin-left: auto; display: flex; align-items: center; padding-right: 8px; }
.head-right > button { width: 40px; height: 32px; }
.rule { width: 1px; height: 24px; background: #dcdfe4; margin: 0 12px 0 8px; }
.share { display: flex; margin: 0 16px 0 8px; border: 1px solid #3d40c0; border-radius: 4px; height: 32px; background: #3d40c0; }
.share-main { width: 103px; color: #fff; font-weight: 600; gap: 8px; }
.share-link { width: 30px; background: #fff; color: #5558d8; border-radius: 0 3px 3px 0; }
.head-right > .avatar { width: 32px; border-radius: 50%; background: #ffe23c; color: #111; font-weight: 600; }

/* formatting toolbar */
.toolbar { height: 41px; flex: none; display: flex; border-bottom: 1px solid #dfe2e7; }
.grp { display: flex; align-items: center; border-right: 1px solid #dfe2e7; }
.tb { width: 34px; height: 40px; font-size: 19px; }
.tb em { font-family: "Liberation Mono", monospace; }
.tb b { font-weight: 600; }
.tb .caret.small { border-width: 5px 3px 0; margin-left: 1px; }
.off { color: #9a9ea6; }
.bar { background: linear-gradient(#2b2b2b, #2b2b2b) center 33px / 18px 4px no-repeat; }
.hist { width: 74px; padding-left: 3px; }
.paint { width: 39px; padding-left: 2px; }
.text { width: 587px; padding-left: 4px; gap: 4px; }
.sel { display: grid; align-items: center; height: 24px; border: 1px solid #878d98; border-radius: 4px; }
.sel select { grid-area: 1 / 1; appearance: none; padding-left: 8px; width: 100%; height: 22px; }
.sel::after { content: ""; grid-area: 1 / 1; justify-self: end; margin-right: 8px; border: 4px solid transparent; border-top: 7px solid #222; border-bottom: 0; }
.style { width: 136px; }
.family { width: 150px; font-family: "Liberation Sans", sans-serif; }
.step, .line, .ends { display: flex; align-items: center; height: 24px; border: 1px solid #878d98; border-radius: 4px; }
.step { width: 80px; }
.step button { width: 19px; height: 22px; font-size: 16px; }
.step input { width: 40px; height: 22px; text-align: right; padding-right: 3px; border: solid #878d98; border-width: 0 1px; }
.btns { display: flex; margin-left: -2px; }
.shape { width: 557px; padding-left: 2px; }
.line { width: 128px; margin: 0 2px; }
.line-style { width: 58px; height: 22px; gap: 8px; }
.stroke { width: 30px; height: 2px; background: #4a4f57; }
.line input { width: 52px; height: 22px; padding-right: 6px; text-align: right; border-left: 1px solid #878d98; }
.spin { display: flex; flex-direction: column; gap: 4px; }
.spin .caret { border-width: 5px 3px 0; }
.spin .caret.up { border-width: 0 3px 5px; }
.ends { width: 144px; margin: 0 1px 0 2px; border-color: #c6c9cf; }
.ends button { flex: 1; height: 22px; gap: 11px; }
.ends button + button { border-left: 1px solid #c6c9cf; gap: 18px; }
.more { border: 0; padding-left: 2px; }
.dock { margin-left: auto; margin-right: 3px; }

/* workspace */
.work { flex: 1; display: flex; min-height: 0; }
.rail { width: 41px; flex: none; padding: 4px; display: flex; flex-direction: column; gap: 4px; border-right: 1px solid #dfe2e7; }
.rail button { width: 32px; height: 32px; border-radius: 4px; }
.rail .on { background: #dedffc; color: #4448c8; }
.panel { width: 215px; flex: none; border-right: 1px solid #dfe2e7; display: flex; flex-direction: column; }
.panel-head { height: 40px; flex: none; display: flex; align-items: center; justify-content: space-between; padding: 0 16px; border-bottom: 1px solid #dfe2e7; }
.panel-head h2 { font-size: 18px; font-weight: 600; }
.panel-head button { color: #4448c8; }
.box { flex: none; padding: 19px 16px 0 8px; border-bottom: 1px solid #dfe2e7; }
.use { height: 139px; }
.std, .cls { height: 147px; }
.saved-box { height: 210px; }
.box-head { display: flex; align-items: center; height: 24px; }
.box-head h3 { flex: 1; font-size: 14px; font-weight: 600; white-space: nowrap; }
.box-head .s { width: 16px; height: 16px; stroke-width: 1.5; margin-right: 4px; }
.box-head .t { width: 16px; height: 16px; stroke-width: 1.8; margin-right: 8px; }
.box-head .grip { width: 16px; height: 16px; }
.cells { display: grid; grid-template-columns: repeat(5, 24px); gap: 11px 12px; margin: 17px 0 0 16px; }
.cells svg { width: 24px; height: 24px; stroke: #000; overflow: visible; }
.cells.uml svg { width: 28px; margin-left: -2px; stroke: #444; }
.key { display: block; text-align: center; color: #1b7be4; margin: 6px 0 0 12px; line-height: 20px; }
.drop { width: 179px; height: 100px; margin: 11px 0 0 9px; border: 2px dashed #a9aeb8; display: flex; flex-direction: column; align-items: center; }
.drop svg { width: 98px; height: 52px; margin-top: 7px; }
.drop p { margin-top: 9px; font-style: italic; line-height: 20px; color: #747b86; }
.more-shapes { height: 73px; flex: none; display: flex; flex-direction: column; align-items: center; padding-top: 12px; border-bottom: 1px solid #dfe2e7; }
.more-shapes svg { width: 90px; height: 24px; margin-bottom: -12px; }
.more-shapes button { width: 168px; height: 32px; position: relative; border-radius: 4px; background: #3d40c0; color: #fff; font-weight: 600; }
.import { height: 45px; gap: 8px; font-size: 16px; }

/* canvas: items sit at their document coordinates */
.canvas { flex: 1; min-width: 0; position: relative; overflow: hidden; background: #cdd3db; }
.card { position: absolute; left: -40px; top: 57px; width: 85px; height: 574px; padding: 165px 0 0 38px; background: #fff; border-radius: 16px; box-shadow: 1px 2px 5px #555; }
.card p { height: 232px; white-space: pre; font: italic 12px/15px "Liberation Sans", sans-serif; color: #777; }
.pill { display: block; width: 64px; height: 45px; margin: 0 0 12px -38px; border-radius: 14px; background: #78828c; box-shadow: 1px 3px 4px #555; }
.hand { position: absolute; left: 38px; top: 430px; width: 16px; height: 24px; }
.sheet { position: absolute; left: 72px; top: 16px; width: 1420px; bottom: -60px; box-shadow: 0 0 7px rgba(40, 40, 60, .45);
  background:
    linear-gradient(#dedede 1px, transparent 1px) 0 -1px / 89px 89px,
    linear-gradient(90deg, #dedede 1px, transparent 1px) 0 0 / 89px 89px,
    linear-gradient(#ededed 1px, transparent 1px) 0 21px / 89px 89px,
    linear-gradient(#ededed 1px, transparent 1px) 0 43px / 89px 89px,
    linear-gradient(#ededed 1px, transparent 1px) 0 66px / 89px 89px,
    linear-gradient(90deg, #ededed 1px, transparent 1px) 22px 0 / 89px 89px,
    linear-gradient(90deg, #ededed 1px, transparent 1px) 44px 0 / 89px 89px,
    linear-gradient(90deg, #ededed 1px, transparent 1px) 67px 0 / 89px 89px,
    #fff; }
.wires { position: absolute; left: 0; top: 0; width: 1420px; height: 784px; stroke: #444; stroke-width: 1; }
.wires .dots { stroke: #222; stroke-dasharray: 1 1; }
.caption { position: absolute; left: 220px; top: 18px; width: 173px; text-align: center; font-family: "Liberation Sans", sans-serif; color: #b3b8c1; }
.caption h2 { font-size: 15px; line-height: 20px; border-bottom: 2px solid #bcc1c9; }
.caption p { font-size: 8px; line-height: 16px; }
.caption span { margin: 0 8px; }

.node { position: absolute; width: 168px; border: 1px solid #3c3c3c; background: #fff; font: 10px/12px "Liberation Sans", sans-serif; color: #333; }
.node h3 { height: 20px; font-size: 10px; line-height: 18px; text-align: center; }
.node p { border-top: 1px solid #3c3c3c; padding: 9px 0 10px 6px; min-height: 32px; white-space: pre; }
.n-lives { left: 55px; top: 65px; }
.n-end { left: 277px; top: 53px; width: 190px; }
.n-upgrade { left: 411px; top: 189px; width: 190px; }
.n-tower { left: 611px; top: 189px; }
.n-slot { left: 761px; top: 41px; }
.n-place { left: 867px; top: 171px; width: 179px; }
.n-path { left: 1175px; top: 89px; }
.n-follow { left: 1144px; top: 211px; width: 235px; }
.n-continue { left: 66px; top: 267px; }
.n-cancel { left: 66px; top: 367px; }
.n-enter { left: 66px; top: 467px; }
.n-quit { left: 66px; top: 567px; }
.n-pause { left: 66px; top: 672px; }
.n-lock { left: 266px; top: 455px; }
.n-cgame { left: 266px; top: 570px; }
.n-menu { left: 266px; top: 678px; width: 190px; }
.n-detect { left: 567px; top: 352px; }
.n-shoot { left: 778px; top: 344px; }
.n-score { left: 555px; top: 633px; }
.n-proj { left: 800px; top: 656px; }
.n-wave { left: 1123px; top: 389px; width: 212px; }
.n-wave p { padding: 20px 0 21px 6px; }
.handles { position: absolute; left: 1093px; top: 359px; width: 272px; height: 394px; }
.sb-h { position: absolute; left: 535px; right: 525px; bottom: 2px; height: 7px; border-radius: 4px; background: #c6c9cf; }
.sb-v { position: absolute; right: 2px; top: 247px; width: 6px; height: 254px; border-radius: 3px; background: #b0b6bf; }

/* status bar */
.status { height: 33px; flex: none; display: flex; align-items: flex-start; padding-left: 4px; border-top: 1px solid #dfe2e7; background: #f9fafc; }
.status > button { width: 36px; height: 32px; }
.status > .sheet-tab { width: 111px; height: 28px; margin: 0 5px 0 9px; gap: 20px; border-radius: 0 0 4px 4px; background: #6f7682; color: #fff; }
.status-right { margin-left: auto; display: flex; height: 32px; }
.status-right > * { border-left: 1px solid #dfe2e7; }
.selobj { width: 198px; gap: 4px; }
.count { width: 16px; height: 16px; margin: 0 5px 0 1px; border-radius: 50%; background: #dcdcfd; color: #4a4ed0; font-size: 12px; line-height: 16px; }
.cell { width: 33px; }
.zoom { width: 119px; display: flex; align-items: center; justify-content: space-between; padding: 0 4px; }
.full { width: 41px; }

/* system taskbar */
.taskbar { height: 40px; flex: none; display: flex; align-items: center; background: #101010; color: #fff; font-family: "Open Sans", sans-serif; }
.start { width: 48px; height: 40px; }
.start svg { width: 18px; height: 18px; }
.find { width: 288px; height: 40px; display: flex; align-items: center; background: #3b3b3b; border: 1px solid #5c5c5c; padding-left: 8px; overflow: hidden; }
.find input { flex: 1; height: 38px; padding-left: 7px; font-size: 14px; outline: 0; }
.find input::placeholder { color: #cfcfcf; opacity: 1; }
.art { width: 80px; height: 38px; align-self: flex-end; }
.apps { display: flex; }
.apps button { width: 49px; height: 40px; position: relative; }
.app { width: 24px; height: 24px; }
.apps .now { background-color: #333; }
.open { box-shadow: inset 0 -2px #6fdcec; }
.note { position: absolute; right: 4px; bottom: 4px; width: 17px; height: 17px; border: 1px solid #888; border-radius: 50%; background: #2e2e2e; font-size: 11px; line-height: 15px; text-align: center; }
.tray { margin: 0 4px 0 auto; display: flex; align-items: center; font-size: 12px; border-right: 1px solid #555; }
.news { width: 24px; height: 20px; margin-right: 20px; }
.tray .ic { width: 20px; height: 20px; margin-right: 3px; stroke-width: 1.6; }
.tray .up { width: 24px; height: 24px; margin-right: 4px; }
.lang { margin: 0 6px; }
.tray time { text-align: center; line-height: 18px; }
.alerts { position: relative; width: 32px; height: 40px; margin: 0 2px 0 12px; }
.alerts svg { width: 16px; height: 18px; }
.alerts .note { right: 0; bottom: 5px; }
```
